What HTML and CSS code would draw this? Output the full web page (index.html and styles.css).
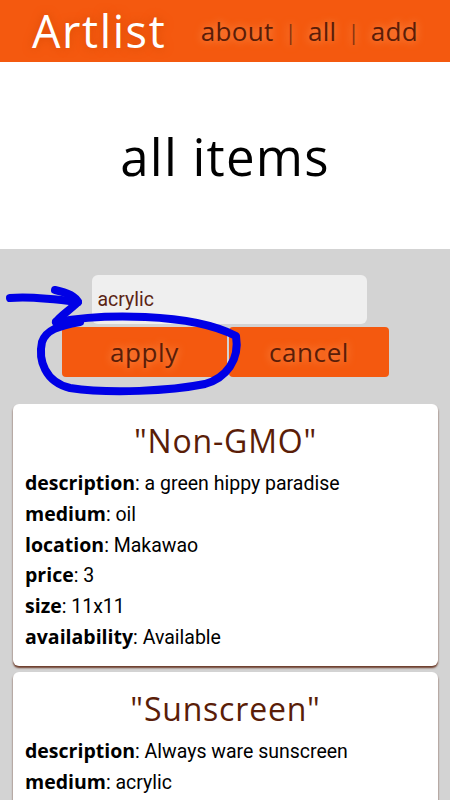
FILE: index.html
```
<!DOCTYPE html>
<html>
<head>
<meta charset="utf-8">
<link rel="stylesheet" href="styles.css">
</head>
<body>
<header class="topbar">
  <div class="logo">Artlist</div>
  <nav class="nav"><span>about</span><span class="sep">|</span><span>all</span><span class="sep">|</span><span>add</span></nav>
</header>
<section class="hero"><h1>all items</h1></section>
<main class="content">
  <form class="filter">
    <input class="search" type="text" value="acrylic">
    <div class="buttons">
      <button type="button" class="btn btn-apply">apply</button>
      <button type="button" class="btn btn-cancel">cancel</button>
    </div>
  </form>
  <article class="card">
    <h2>"Non-GMO"</h2>
    <p><b>description</b>: a green hippy paradise</p>
    <p><b>medium</b>: oil</p>
    <p><b>location</b>: Makawao</p>
    <p><b>price</b>: 3</p>
    <p><b>size</b>: 11x11</p>
    <p><b>availability</b>: Available</p>
  </article>
  <article class="card">
    <h2>"Sunscreen"</h2>
    <p><b>description</b>: Always ware sunscreen</p>
    <p><b>medium</b>: acrylic</p>
    <p class="spacer"></p>
  </article>
</main>
<svg class="scribble" width="450" height="800" viewBox="0 0 450 800">
  <path d="M10 298 C 30 296, 55 299, 78 302" />
  <path d="M55 290 C 65 292, 75 296, 78 302 C 70 310, 60 316, 56 322" />
  <path d="M56 322 C 100 314, 190 312, 236 336 C 240 360, 226 378, 205 384 C 170 391, 110 394, 70 388 C 45 382, 38 360, 42 342 C 46 330, 58 326, 80 322" />
</svg>
</body>
</html>
```
FILE: styles.css
```
* { box-sizing: border-box; }
html, body { margin: 0; padding: 0; }
body {
  width: 450px;
  height: 800px;
  background: #d3d3d3;
  font-family: Roboto, "Liberation Sans", sans-serif;
  position: relative;
  overflow: hidden;
}
.topbar {
  height: 62px;
  background: #f4590f;
  display: flex;
  align-items: center;
  justify-content: space-between;
  padding: 0 32px 0 32px;
}
.logo {
  font-family: "Open Sans", sans-serif;
  font-size: 45px;
  color: #fff;
  letter-spacing: 1.6px;
  text-shadow: 0 0 10px #d84a06;
  line-height: 1;
  margin-top: -2px;
}
.nav {
  font-family: "Open Sans", sans-serif;
  font-size: 26px;
  letter-spacing: 0.3px;
  color: #5a1d08;
  display: flex;
  gap: 11px;
  text-shadow: 0 0 8px #ff9a5c;
  line-height: 1;
}
.nav .sep { color: #8a3510; font-size: 22px; align-self: center; }
.hero {
  height: 187px;
  background: #fff;
  display: flex;
  align-items: center;
  justify-content: center;
}
.hero h1 {
  margin: 0;
  font-family: "Open Sans", sans-serif;
  font-weight: 400;
  font-size: 51px;
  letter-spacing: 1.2px;
  color: #000;
}
.content {
  padding: 26px 12px 20px 13px;
}
.filter {
  display: flex;
  flex-direction: column;
  align-items: center;
}
.search {
  width: 275px;
  height: 49px;
  margin-left: 7px;
  border: none;
  border-radius: 6px;
  background: #efefef;
  font-family: Roboto, sans-serif;
  font-size: 19.5px;
  color: #5a2414;
  padding: 0 6px;
  outline: none;
}
.buttons {
  display: flex;
  gap: 2px;
  margin-top: 3px;
}
.btn {
  height: 50px;
  border: none;
  border-radius: 4px;
  background: #f4590f;
  font-family: "Open Sans", sans-serif;
  font-size: 26px;
  letter-spacing: 0.6px;
  color: #5a1d08;
  text-shadow: 0 0 8px #ff9a5c;
  padding: 0;
}
.btn-apply { width: 165px; }
.btn-cancel { width: 160px; }
.card {
  background: #fff;
  border-radius: 6px;
  box-shadow: 0 2px 2px #6b3a28;
  margin-top: 27px;
  padding: 12px 12px 12px 12px;
  width: 425px;
}
.card + .card { margin-top: 6px; }
.card h2 {
  margin: 0 0 3px 0;
  text-align: center;
  font-family: "Open Sans", sans-serif;
  font-weight: 400;
  font-size: 32px;
  letter-spacing: 0.8px;
  color: #5a1d08;
  line-height: 50px;
}
.card p {
  margin: 0;
  font-size: 19.5px;
  line-height: 30.8px;
  color: #000;
}
.card .spacer { height: 60px; }
.card b {
  font-family: "Open Sans", sans-serif;
  font-weight: 700;
  line-height: 20px;
}
.scribble {
  position: absolute;
  left: 0;
  top: 0;
  pointer-events: none;
}
.scribble path {
  fill: none;
  stroke: #0000e6;
  stroke-width: 8;
  stroke-linecap: round;
  stroke-linejoin: round;
}
```
